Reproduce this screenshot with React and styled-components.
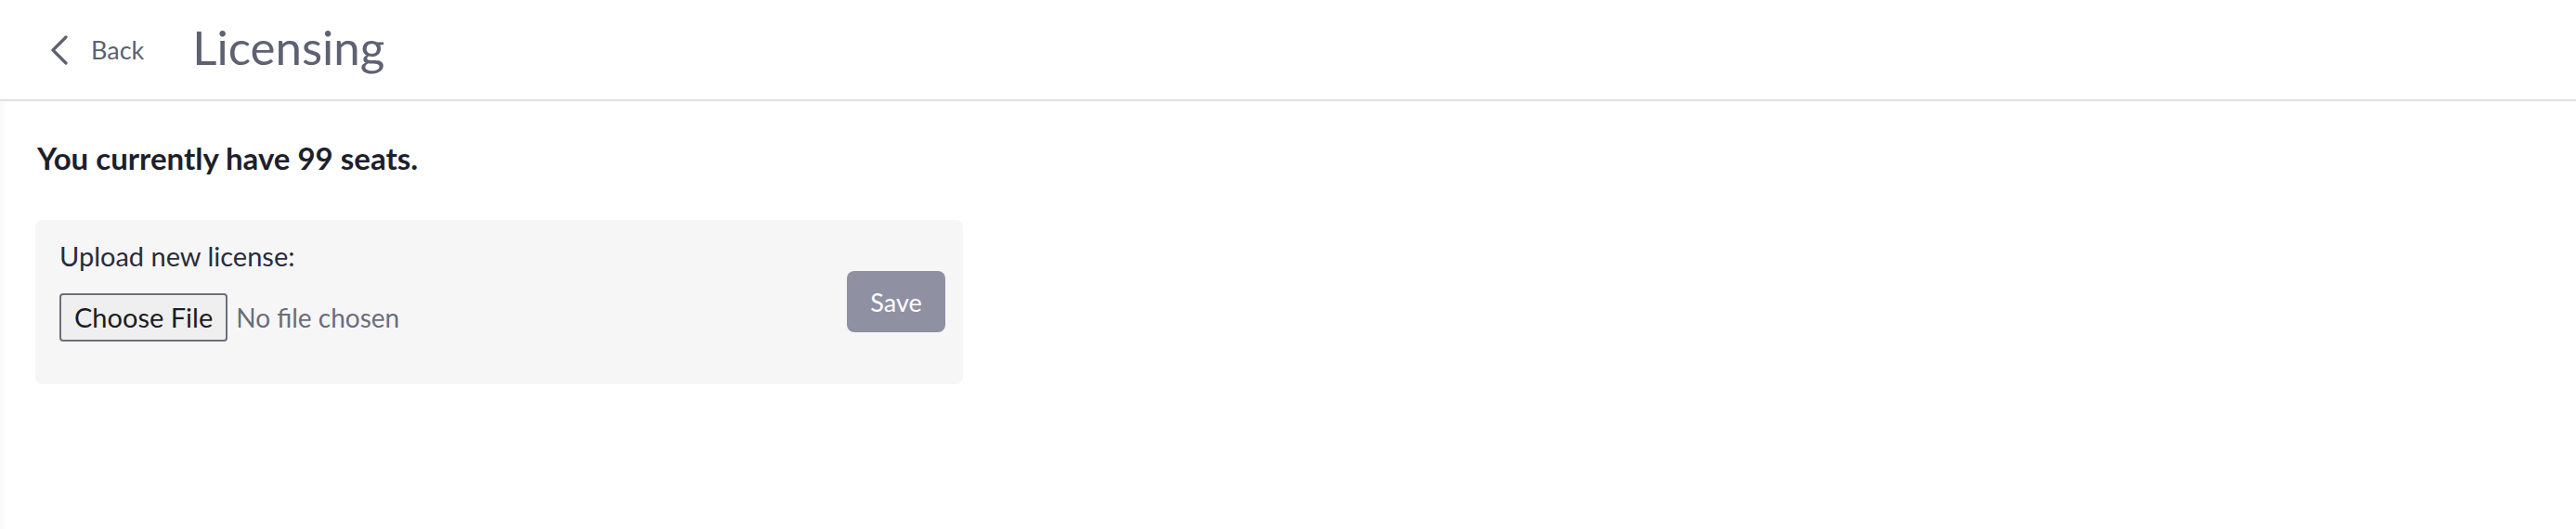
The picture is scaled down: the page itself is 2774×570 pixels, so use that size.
import React from "react";
import styled, { createGlobalStyle } from "styled-components";

const GlobalStyle = createGlobalStyle`
  html, body {
    margin: 0;
    padding: 0;
    background: #ffffff;
  }
  body {
    font-family: Lato, "Liberation Sans", sans-serif;
    -webkit-font-smoothing: antialiased;
  }
`;

const Page = styled.div`
  width: 2774px;
  height: 570px;
  display: flex;
  flex-direction: column;
  background: #ffffff;
`;

const Header = styled.header`
  height: 107px;
  display: flex;
  align-items: center;
  padding-left: 53px;
  border-bottom: 2px solid #e0e0e2;
  color: #5e6172;
`;

const BackLink = styled.a`
  display: flex;
  align-items: center;
  gap: 23px;
  color: inherit;
  text-decoration: none;
  font-size: 27px;
  line-height: 1;
  margin-right: 52px;
  cursor: pointer;
`;

const Title = styled.h1`
  margin: 0;
  font-size: 51px;
  font-weight: 400;
  line-height: 1;
  position: relative;
  top: -3px;
`;

const Content = styled.main`
  flex: 1;
  padding: 42px 38px 0;
  box-shadow: inset 10px 0 10px -10px rgba(0, 0, 0, 0.06);
`;

const Seats = styled.h2`
  margin: 0 0 46px;
  padding-left: 2px;
  font-size: 33px;
  font-weight: 700;
  line-height: 1.2;
  color: #1e1f2b;
`;

const Panel = styled.section`
  width: 999px;
  height: 177px;
  box-sizing: border-box;
  display: flex;
  align-items: center;
  justify-content: space-between;
  padding: 0 19px 0 26px;
  background: #f6f6f6;
  border-radius: 8px;
`;

const UploadColumn = styled.div`
  display: flex;
  flex-direction: column;
  padding: 21px 0 46px;
`;

const Label = styled.label`
  font-size: 29px;
  line-height: 36px;
  color: #2a2c38;
  margin-bottom: 22px;
`;

const FileRow = styled.div`
  display: flex;
  align-items: center;
  gap: 9px;
`;

const ChooseButton = styled.button`
  height: 52px;
  padding: 0 14px;
  box-sizing: border-box;
  border: 2px solid #6c6e7e;
  border-radius: 4px;
  background: #efefef;
  color: #1b1c22;
  font-family: inherit;
  font-size: 29px;
  line-height: 1;
  cursor: pointer;
`;

const FileName = styled.span`
  font-size: 28px;
  color: #6a6d7d;
`;

const SaveButton = styled.button`
  width: 106px;
  height: 66px;
  border: none;
  border-radius: 8px;
  background: #9090a3;
  color: #ffffff;
  font-family: inherit;
  font-size: 27px;
  line-height: 1;
  cursor: pointer;
`;

const Chevron = () => (
  <svg width="22" height="32" viewBox="0 0 22 32" fill="none">
    <path
      d="M18 2 L4 16 L18 30"
      stroke="currentColor"
      strokeWidth="3.2"
      strokeLinecap="round"
      strokeLinejoin="round"
    />
  </svg>
);

const App = () => {
  return (
    <>
      <GlobalStyle />
      <Page>
        <Header>
          <BackLink>
            <Chevron />
            <span>Back</span>
          </BackLink>
          <Title>Licensing</Title>
        </Header>

        <Content>
          <Seats>You currently have 99 seats.</Seats>
          <Panel>
            <UploadColumn>
              <Label>Upload new license:</Label>
              <FileRow>
                <ChooseButton type="button">Choose File</ChooseButton>
                <FileName>No file chosen</FileName>
              </FileRow>
            </UploadColumn>
            <SaveButton type="button">Save</SaveButton>
          </Panel>
        </Content>
      </Page>
    </>
  );
};

export default App;
